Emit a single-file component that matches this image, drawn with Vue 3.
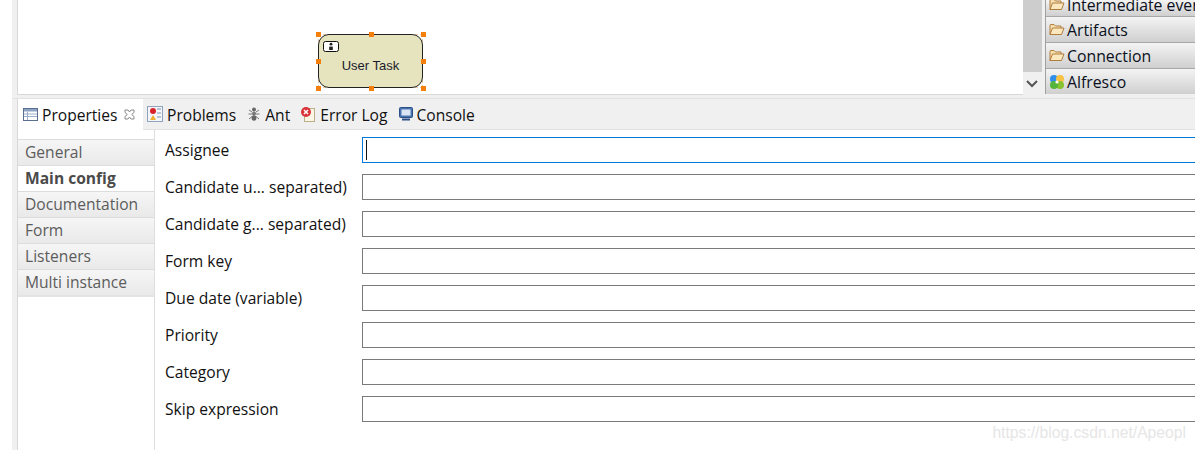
<script setup>
const palette = ['Intermediate events', 'Artifacts', 'Connection']
const tabs = [
  { label: 'General' },
  { label: 'Main config', active: true },
  { label: 'Documentation' },
  { label: 'Form' },
  { label: 'Listeners' },
  { label: 'Multi instance' },
]
const fields = ['Assignee', 'Candidate u... separated)', 'Candidate g... separated)', 'Form key', 'Due date (variable)', 'Priority', 'Category', 'Skip expression']
const handles = [
  [0, 0], [50, 0], [100, 0], [0, 50], [100, 50], [0, 100], [50, 100], [100, 100],
]
</script>

<template>
  <div class="app">
    <div class="top">
      <div class="canvas">
        <div class="node">
          <div class="outline"></div>
          <div class="task">
            <svg class="user" width="16" height="11" viewBox="0 0 16 11">
              <rect x="0.5" y="0.5" width="15" height="10" rx="2" fill="#fff" stroke="#111" />
              <circle cx="8" cy="3.2" r="1.4" fill="#222" />
              <path d="M6.200 9V5.600H9.800V9Z" fill="#222" />
            </svg>
            <span>User Task</span>
          </div>
          <i v-for="(h, i) in handles" :key="i" class="handle" :style="{ left: h[0] + '%', top: h[1] + '%' }"></i>
        </div>
      </div>
      <div class="scroll">
        <div class="thumb"></div>
        <svg width="19" height="23" viewBox="0 0 19 23"><path d="M4 9l5 5 5-5" fill="none" stroke="#555" stroke-width="2" /></svg>
      </div>
      <div class="palette">
        <div v-for="p in palette" :key="p" class="drawer">
          <svg width="16" height="13" viewBox="0 0 16 13">
            <path d="M1 11.500V2.500Q1 1.500 2 1.500H5L6.500 3H12V5" fill="#f6dfae" stroke="#b07c3c" />
            <path d="M1 11.500L3.500 5H15L12.500 11.500Z" fill="#fbe8bf" stroke="#b07c3c" />
          </svg>
          <span>{{ p }}</span>
        </div>
        <div class="drawer last">
          <svg width="16" height="16" viewBox="0 0 16 16">
            <circle cx="5" cy="5" r="4" fill="#2f8fe8" />
            <circle cx="11" cy="5" r="4" fill="#f5c242" />
            <circle cx="11" cy="11" r="4" fill="#86c232" />
            <circle cx="5" cy="11" r="4" fill="#55b43a" />
            <circle cx="8" cy="8" r="1.600" fill="#fff" />
          </svg>
          <span>Alfresco</span>
        </div>
      </div>
    </div>

    <div class="panel">
      <div class="tabbar">
        <div class="vtab current">
          <svg width="15" height="13" viewBox="0 0 15 13">
            <rect x="0.500" y="0.500" width="14" height="12" fill="#fff" stroke="#5a6f90" />
            <rect x="1" y="1" width="13" height="2.500" fill="#8ea4c4" />
            <path d="M4.500 3.500V12M1 6h13M1 8.500h13" stroke="#9db0cb" fill="none" />
          </svg>
          <span>Properties</span>
          <svg class="close" width="11" height="11" viewBox="0 0 11 11">
            <path d="M1 1H4L5.500 3 7 1H10V3.500L7.700 5.500 10 7.500V10H7L5.500 8 4 10H1V7.500L3.300 5.500 1 3.500Z" fill="#fff" stroke="#8a8a8a" />
          </svg>
        </div>
        <div class="vtab problems">
          <svg width="16" height="16" viewBox="0 0 16 16">
            <rect x="0.500" y="0.500" width="15" height="15" fill="#f4f6fa" stroke="#8fa3bd" />
            <circle cx="6" cy="5" r="3" fill="#d8232a" />
            <path d="M3 14l3-5 3 5Z" fill="#f0b030" />
            <path d="M10 3h4M10 7h4M10 11h4" stroke="#7f96b5" fill="none" />
          </svg>
          <span>Problems</span>
        </div>
        <div class="vtab ant">
          <svg width="12" height="14" viewBox="0 0 12 14">
            <ellipse cx="6" cy="2.500" rx="2" ry="2" fill="#666" />
            <ellipse cx="6" cy="6.500" rx="2" ry="2" fill="#777" />
            <ellipse cx="6" cy="11" rx="2.400" ry="2.800" fill="#666" />
            <path d="M1 3l3 2M11 3L8 5M0.500 7h4M11.500 7h-4M1 12l3-2.500M11 12L8 9.500" stroke="#777" fill="none" />
          </svg>
          <span>Ant</span>
        </div>
        <div class="vtab err">
          <svg width="16" height="16" viewBox="0 0 16 16">
            <rect x="4.500" y="2.500" width="10" height="13" fill="#fbf6e6" stroke="#b9b08a" />
            <circle cx="6" cy="6" r="5" fill="#d9343a" />
            <path d="M4 4l4 4M8 4l-4 4" stroke="#fff" stroke-width="1.500" fill="none" />
          </svg>
          <span>Error Log</span>
        </div>
        <div class="vtab console">
          <svg width="14" height="14" viewBox="0 0 14 14">
            <rect x="0.500" y="0.500" width="13" height="10" rx="1" fill="#4a74b0" stroke="#2c4f86" />
            <rect x="2.500" y="2.500" width="9" height="6" fill="#dbe6f5" />
            <path d="M3 12.500h8" stroke="#2c4f86" stroke-width="2" fill="none" />
          </svg>
          <span>Console</span>
        </div>
      </div>

      <div class="body">
        <div class="side">
          <div class="side-list">
            <div v-for="t in tabs" :key="t.label" class="stab" :class="{ on: t.active }">{{ t.label }}</div>
          </div>
        </div>
        <div class="form">
          <div v-for="(f, i) in fields" :key="f" class="row">
            <label>{{ f }}</label>
            <div class="input" :class="{ focus: i === 0 }"><b v-if="i === 0"></b></div>
          </div>
        </div>
      </div>
    </div>
    <div class="mark">https://blog.csdn.net/Apeopl</div>
  </div>
</template>

<style scoped>
.app {
  position: relative;
  width: 1195px;
  height: 450px;
  overflow: hidden;
  padding-left: 12px;
  box-sizing: border-box;
  background: #fff;
  font-family: "Open Sans", "Noto Sans", sans-serif;
  font-size: 15.600px;
  color: #111;
  display: flex;
  flex-direction: column;
}
.top {
  height: 99px;
  flex: none;
  display: flex;
  background: #f0f0f0;
  padding-left: 5px;
  border-bottom: 1px solid #e2e2e2;
  box-sizing: border-box;
}
.canvas {
  width: 1006px;
  height: 95px;
  flex: none;
  background: #fff;
  border-left: 1px solid #d8d8d8;
  border-bottom: 1px solid #d8d8d8;
  box-sizing: border-box;
  position: relative;
}
.node {
  position: absolute;
  left: 300px;
  top: 34px;
  width: 105px;
  height: 54px;
}
.outline {
  position: absolute;
  inset: 0;
  border: 1px dashed #e9c7a4;
}
.task {
  position: absolute;
  inset: 0;
  background: #e5e4bf;
  border: 1px solid #222;
  border-radius: 11px;
  font-family: "Liberation Sans", sans-serif;
  font-size: 13px;
  display: flex;
  align-items: center;
  justify-content: center;
  padding-top: 8px;
  box-sizing: border-box;
  color: #1a1a2a;
}
.user {
  position: absolute;
  left: 4px;
  top: 6px;
}
.handle {
  position: absolute;
  width: 5px;
  height: 5px;
  margin: -2px 0 0 -2px;
  background: #f47f0c;
}
.scroll {
  width: 19px;
  flex: none;
  height: 95px;
  display: flex;
  flex-direction: column;
  background: #f0f0f0;
}
.thumb {
  height: 72px;
  background: #cdcdcd;
}
.palette {
  width: 150px;
  flex: none;
  margin-left: 3px;
  height: 94px;
  border-left: 1px solid #a0a0a0;
  box-sizing: border-box;
  background: #f0f0f0;
}
.drawer {
  display: flex;
  align-items: center;
  gap: 2px;
  padding-left: 3px;
  height: 26px;
  box-sizing: border-box;
  border-bottom: 1px solid #a8a8a8;
  background: linear-gradient(#f4f4f4, #cfcfcf);
  white-space: nowrap;
  overflow: hidden;
  font-size: 15.800px;
  color: #0b1020;
}
.drawer svg {
  flex: none;
}
.drawer:first-child {
  height: 17px;
  align-items: flex-end;
}
.drawer:first-child svg {
  margin-bottom: 5px;
}
.drawer.last {
  height: 25px;
  border-bottom: 0;
  padding-left: 3px;
}
.panel {
  flex: 1;
  display: flex;
  flex-direction: column;
  min-height: 0;
  background: #f0f0f0;
  padding-left: 5px;
}
.tabbar {
  height: 31px;
  flex: none;
  display: flex;
  align-items: center;
  background: #f0f0f0;
  border-bottom: 1px solid #e2e2e2;
  box-sizing: border-box;
  position: relative;
}
.vtab {
  display: flex;
  align-items: center;
  gap: 4px;
  height: 100%;
  white-space: nowrap;
}
.vtab span {
  padding-top: 1px;
}
.vtab.current {
  width: 126px;
  height: 31px;
  padding-left: 5px;
  box-sizing: border-box;
  background: #fff;
  border-left: 1px solid #d8d8d8;
  align-self: flex-start;
}
.close { margin-left: 2px; }
.problems { margin-left: 4px; gap: 4px; }
.ant { margin-left: 12px; gap: 5px; }
.err { margin-left: 10px; gap: 4px; }
.console { margin-left: 12px; gap: 3px; }
.body {
  flex: 1;
  display: flex;
  min-height: 0;
  background: #fff;
  border-left: 1px solid #d8d8d8;
}
.side {
  width: 137px;
  flex: none;
  box-sizing: border-box;
  border-right: 1px solid #dedede;
  padding-top: 9px;
}
.side-list {
  border-bottom: 2px solid #e4e4e4;
}
.stab {
  height: 26px;
  box-sizing: border-box;
  padding: 1px 0 0 7px;
  line-height: 22px;
  color: #5c5c5c;
  background: linear-gradient(#f6f6f6, #e9e9e9);
  border-top: 1px solid #dcdcdc;
  white-space: nowrap;
}
.stab.on {
  background: #fff;
  font-weight: 700;
  color: #4a4a4a;
}
.form {
  flex: 1;
  min-width: 0;
  padding: 7px 0 0 10px;
  display: flex;
  flex-direction: column;
  gap: 11px;
}
.row {
  display: flex;
  height: 26px;
  align-items: flex-start;
}
label {
  width: 197px;
  flex: none;
  white-space: nowrap;
  line-height: 26px;
}
.input {
  flex: none;
  width: 900px;
  height: 26px;
  box-sizing: border-box;
  border: 1px solid #7a7a7a;
  background: #fff;
  position: relative;
}
.input.focus {
  border-color: #0078d7;
}
.input b {
  display: block;
  width: 1px;
  height: 20px;
  margin: 2px 0 0 3px;
  background: #111;
}
.mark {
  position: absolute;
  right: 9px;
  bottom: 8px;
  font-family: "Liberation Sans", sans-serif;
  font-size: 15.700px;
  color: #e6e6e6;
}
</style>
